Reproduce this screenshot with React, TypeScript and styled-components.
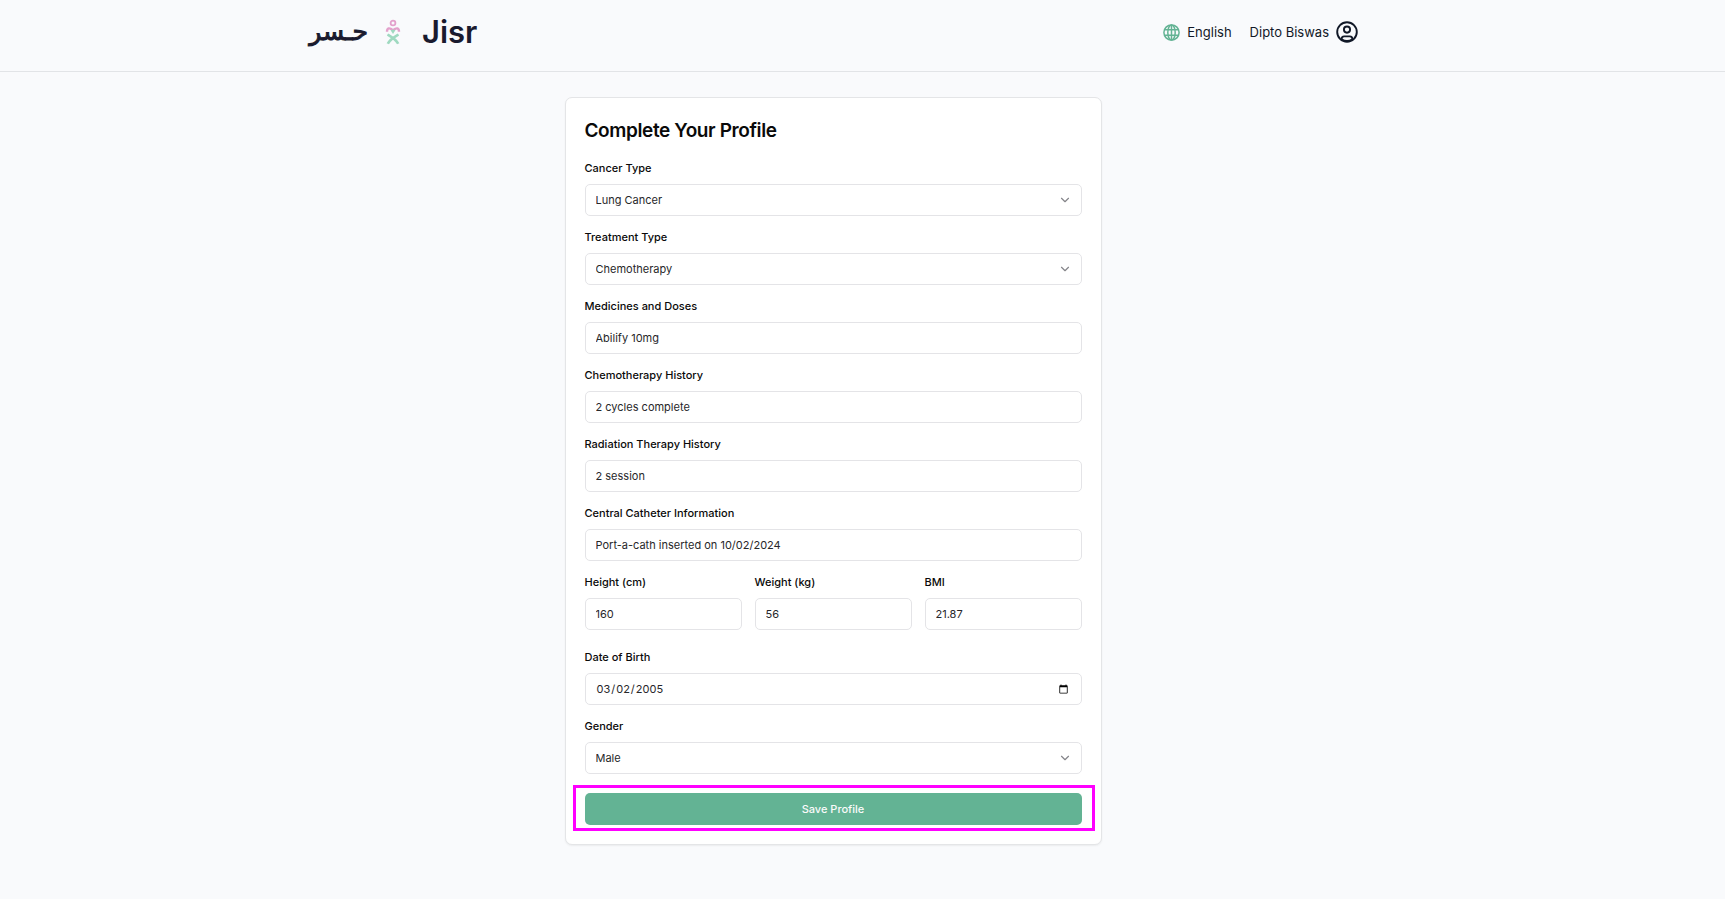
import React from "react";
import styled, { createGlobalStyle, css } from "styled-components";
import { ChevronDown } from "lucide-react";

const GlobalStyle = createGlobalStyle`
  *, *::before, *::after { box-sizing: border-box; }
  body {
    margin: 0;
    background: #f9fafc;
    color: #0a0a0a;
    font-family: Inter, "Liberation Sans", sans-serif;
  }
`;

const Page = styled.div`
  padding-right: 59px;
  min-height: 100vh;
`;

const Header = styled.header`
  height: 72px;
  margin-right: -59px;
  padding-right: 59px;
  border-bottom: 1px solid #e2e4e7;
`;

const HeaderInner = styled.div`
  display: flex;
  align-items: center;
  justify-content: space-between;
  max-width: 1050px;
  height: 64px;
  margin: 0 auto;
`;

const Brand = styled.a`
  display: flex;
  align-items: center;
  color: #1a1a2e;
  text-decoration: none;
`;

const ArabicName = styled.span`
  width: 60px;
  text-align: right;
  font-family: "DejaVu Sans", sans-serif;
  font-size: 25px;
  font-weight: 400;
  line-height: 32px;
  -webkit-text-stroke: 1px currentColor;
`;

const LatinName = styled.span`
  font-size: 31px;
  font-weight: 600;
  line-height: 40px;
`;

const BrandMark = styled.svg`
  width: 16px;
  height: 26px;
  margin: 0 21px 0 17px;
`;

const Actions = styled.nav`
  display: flex;
  align-items: center;
  gap: 18px;
`;

const HeaderButton = styled.button`
  display: flex;
  align-items: center;
  gap: 7px;
  padding: 0;
  border: 0;
  background: none;
  color: #111827;
  font: 400 13px/20px Inter, sans-serif;
`;

const Card = styled.main`
  max-width: 537px;
  margin: 25px auto 0;
  padding: 19px;
  border: 1px solid #e4e5e7;
  border-radius: 7px;
  background: #fff;
  box-shadow: 0 1px 2px rgba(0, 0, 0, 0.06);
`;

const Title = styled.h1`
  margin: 0 0 16px;
  font-size: 19px;
  font-weight: 600;
  line-height: 27px;
  letter-spacing: -0.02em;
`;

const Form = styled.form`
  display: flex;
  flex-direction: column;
  gap: 13px;
`;

const FieldBox = styled.div`
  display: flex;
  flex-direction: column;
  gap: 8px;
  min-width: 0;
`;

const Label = styled.label`
  font-size: 11px;
  font-weight: 500;
  line-height: 16px;
`;

const controlStyle = css`
  width: 100%;
  height: 32px;
  padding: 0 10px;
  border: 1px solid #e4e4e7;
  border-radius: 5px;
  background: #fff;
  color: #27272a;
  font: 400 11px/16px Inter, sans-serif;
`;

const Input = styled.input`
  ${controlStyle}
`;

const Select = styled.select`
  ${controlStyle}
  appearance: none;
`;

const SelectWrap = styled.div`
  position: relative;
  svg {
    position: absolute;
    right: 10px;
    top: 9px;
    color: #85858a;
    pointer-events: none;
  }
`;

const Measures = styled.div`
  display: grid;
  grid-template-columns: repeat(3, 1fr);
  gap: 13px;
  margin-bottom: 6px;
`;

const SaveArea = styled.div`
  position: relative;
  margin-top: 6px;
`;

const Highlight = styled.div`
  position: absolute;
  inset: -8px -13px -6px -12px;
  border: 3px solid #ff00ff;
  pointer-events: none;
`;

const SaveButton = styled.button`
  display: block;
  width: 100%;
  height: 32px;
  border: 0;
  border-radius: 5px;
  background: #63b394;
  color: #fafafa;
  font: 500 11px/16px Inter, sans-serif;
`;

type FieldProps = { id: string; label: string; value: string; type?: string };

function TextField({ id, label, value, type = "text" }: FieldProps) {
  return (
    <FieldBox>
      <Label htmlFor={id}>{label}</Label>
      <Input id={id} type={type} defaultValue={value} />
    </FieldBox>
  );
}

function SelectField({ id, label, value }: FieldProps) {
  return (
    <FieldBox>
      <Label htmlFor={id}>{label}</Label>
      <SelectWrap>
        <Select id={id} defaultValue={value}>
          <option>{value}</option>
        </Select>
        <ChevronDown size={14} strokeWidth={2} aria-hidden />
      </SelectWrap>
    </FieldBox>
  );
}

function RibbonPeople() {
  return (
    <BrandMark viewBox="0 0 16 26" fill="none" aria-hidden>
      <circle cx="8" cy="4" r="2.4" stroke="#e3a1cc" strokeWidth="1.8" />
      <path d="M2 12.8C2 8.8 4.4 8.4 8 11.2C11.6 8.4 14 8.8 14 12.8" stroke="#e3a1cc" strokeWidth="2.4" />
      <path d="M5.6 11.3L8 10.4L10.4 11.3L8 15Z" fill="#9fd9c0" />
      <path d="M2.5 15.5C5 17 11 20 13.2 24.8M13.5 15.5C11 17 5 20 2.8 24.8" stroke="#9fd9c0" strokeWidth="2.6" />
    </BrandMark>
  );
}

function GlobeIcon() {
  return (
    <svg width="17" height="17" viewBox="0 0 17 17" fill="none" stroke="#63b394" strokeWidth="1.5" aria-hidden>
      <circle cx="8.5" cy="8.5" r="7.6" />
      <ellipse cx="8.5" cy="8.5" rx="3.7" ry="7.6" />
      <path d="M8.5 .8V16.2M1.6 5.7H15.4M1.6 11.3H15.4" />
    </svg>
  );
}

function UserCircle() {
  return (
    <svg width="22" height="22" viewBox="0 0 22 22" fill="none" stroke="#111827" strokeWidth="1.9" aria-hidden>
      <circle cx="11" cy="11" r="9.8" />
      <circle cx="11" cy="8.6" r="3.1" />
      <path d="M5.6 18.2C5.6 16.4 6.4 15.4 8.2 15.4H13.8C15.6 15.4 16.4 16.4 16.4 18.2Q11 21.8 5.6 18.2Z" />
    </svg>
  );
}

export default function App() {
  return (
    <Page>
      <GlobalStyle />
      <Header>
        <HeaderInner>
          <Brand href="#">
            <ArabicName lang="ar">حـسر</ArabicName>
            <RibbonPeople />
            <LatinName>Jisr</LatinName>
          </Brand>
          <Actions>
            <HeaderButton type="button">
              <GlobeIcon />
              English
            </HeaderButton>
            <HeaderButton type="button">
              Dipto Biswas
              <UserCircle />
            </HeaderButton>
          </Actions>
        </HeaderInner>
      </Header>
      <Card>
        <Title>Complete Your Profile</Title>
        <Form>
          <SelectField id="cancer" label="Cancer Type" value="Lung Cancer" />
          <SelectField id="treatment" label="Treatment Type" value="Chemotherapy" />
          <TextField id="medicines" label="Medicines and Doses" value="Abilify 10mg" />
          <TextField id="chemo" label="Chemotherapy History" value="2 cycles complete" />
          <TextField id="radiation" label="Radiation Therapy History" value="2 session" />
          <TextField id="catheter" label="Central Catheter Information" value="Port-a-cath inserted on 10/02/2024" />
          <Measures>
            <TextField id="height" label="Height (cm)" value="160" />
            <TextField id="weight" label="Weight (kg)" value="56" />
            <TextField id="bmi" label="BMI" value="21.87" />
          </Measures>
          <TextField id="birth" label="Date of Birth" value="2005-03-02" type="date" />
          <SelectField id="gender" label="Gender" value="Male" />
          <SaveArea>
            <SaveButton type="button">Save Profile</SaveButton>
            <Highlight />
          </SaveArea>
        </Form>
      </Card>
    </Page>
  );
}
